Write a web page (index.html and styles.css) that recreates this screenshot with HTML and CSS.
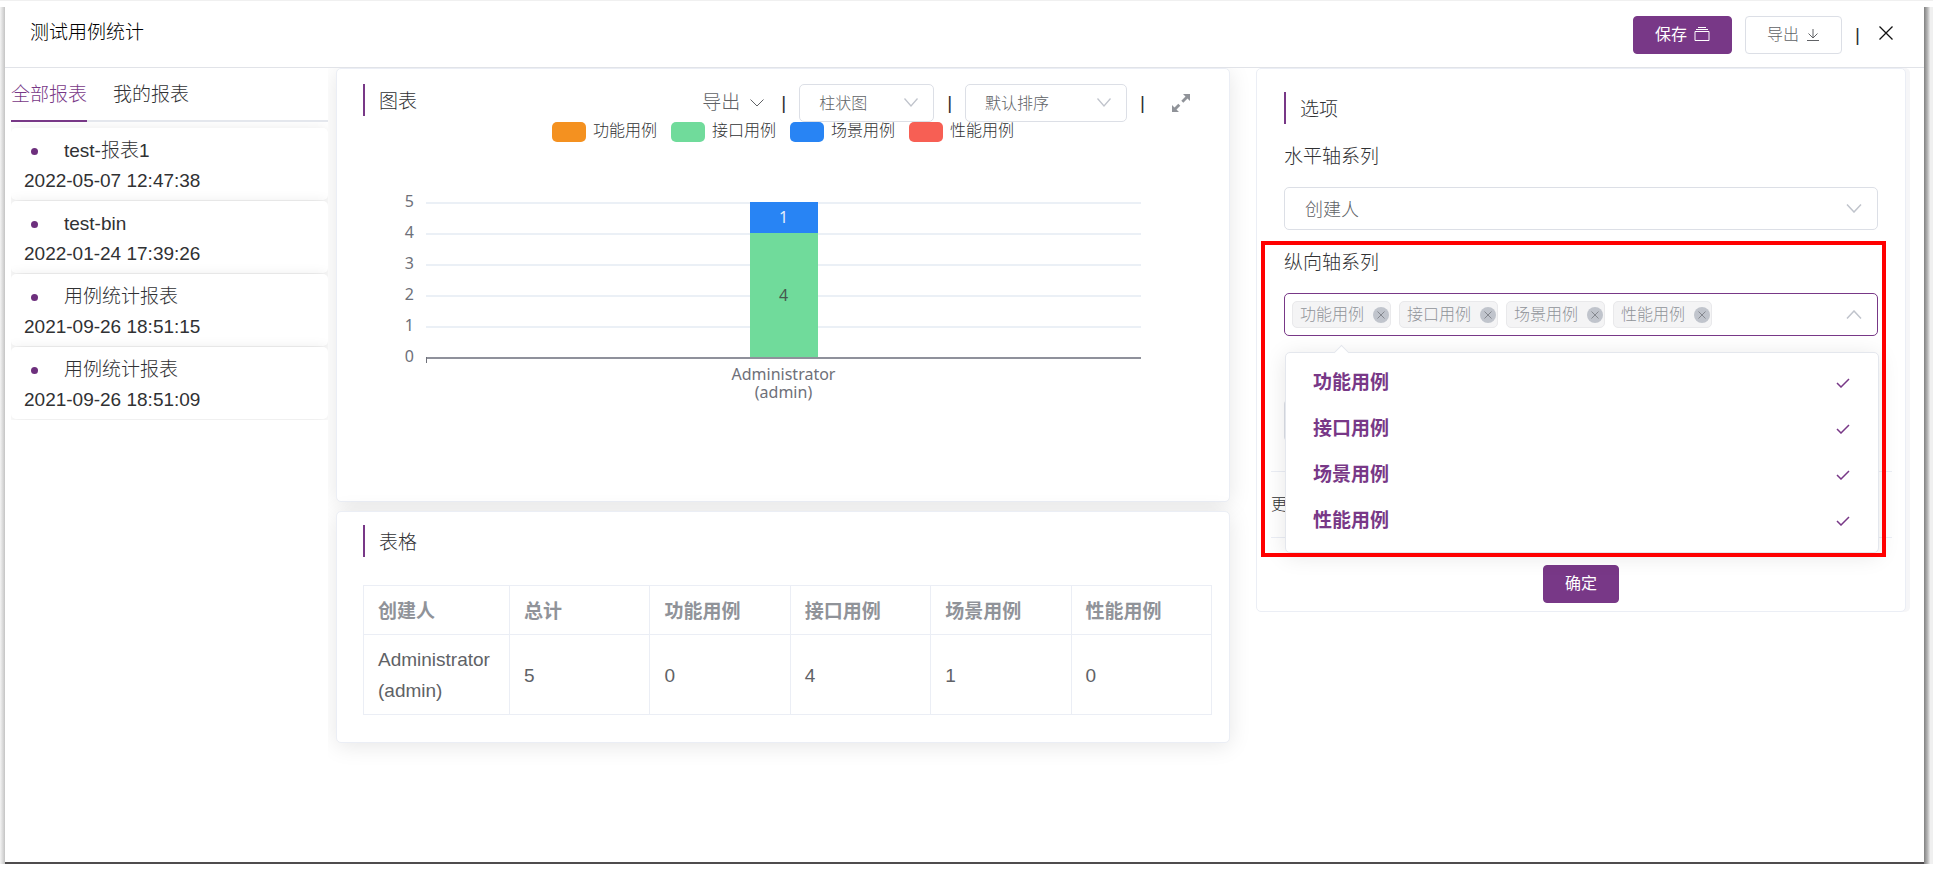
FILE: index.html
```html
<!DOCTYPE html>
<html lang="zh-CN">
<head>
<meta charset="utf-8">
<meta name="viewport" content="width=device-width, initial-scale=1">
<title>测试用例统计</title>
<link rel="stylesheet" href="styles.css">
</head>
<body>
<div class="shell">
<div class="window">
  <header class="topbar">
    <h1 class="topbar-title">测试用例统计</h1>
    <div class="topbar-actions">
      <button class="btn btn-primary" type="button">保存
        <svg class="icon" width="16" height="16" viewBox="0 0 16 16" fill="none" stroke="currentColor"><path d="M1 4.500h14v9H1zM2 2.500h12M4 .5h8"/></svg>
      </button>
      <button class="btn" type="button">导出
        <svg class="icon" width="14" height="14" viewBox="0 0 14 14" fill="none" stroke="currentColor"><path d="M1 12.500h12M7 1v9M2.500 5.500 7 10l4.500-4.500"/></svg>
      </button>
      <span class="bar">|</span>
      <button class="close" type="button" aria-label="关闭">
        <svg width="14" height="14" viewBox="0 0 14 14" fill="none" stroke="currentColor" stroke-width="1.300"><path d="M.5.5l13 13M13.500.5l-13 13"/></svg>
      </button>
    </div>
  </header>

  <div class="columns">
    <aside class="sidebar">
      <nav class="tabs">
        <button class="tab tab-active" type="button">全部报表</button>
        <button class="tab" type="button">我的报表</button>
      </nav>
      <ul class="reports">
        <li class="report"><a class="report-name" href="#">test-报表1</a><time class="report-time">2022-05-07 12:47:38</time></li>
        <li class="report"><a class="report-name" href="#">test-bin</a><time class="report-time">2022-01-24 17:39:26</time></li>
        <li class="report"><a class="report-name" href="#">用例统计报表</a><time class="report-time">2021-09-26 18:51:15</time></li>
        <li class="report"><a class="report-name" href="#">用例统计报表</a><time class="report-time">2021-09-26 18:51:09</time></li>
      </ul>
    </aside>

    <div class="stage">
      <main class="main">
        <section class="card chart-card">
          <div class="card-head">
            <h2 class="card-title">图表</h2>
            <div class="tools">
              <button class="text-btn" type="button">导出
                <svg width="14" height="8" viewBox="0 0 14 8" fill="none" stroke="currentColor"><path d="M.5.5 7 7 13.500.5"/></svg>
              </button>
              <span class="bar">|</span>
              <span class="picker picker-type">
                <select class="select select-small" aria-label="图表类型"><option>柱状图</option></select>
                <svg class="chevron" width="14" height="9" viewBox="0 0 14 9" fill="none" stroke="currentColor" stroke-width="1.300"><path d="M.5.5 7 8 13.500.5"/></svg>
              </span>
              <span class="bar">|</span>
              <span class="picker picker-sort">
                <select class="select select-small" aria-label="排序"><option>默认排序</option></select>
                <svg class="chevron" width="14" height="9" viewBox="0 0 14 9" fill="none" stroke="currentColor" stroke-width="1.300"><path d="M.5.5 7 8 13.500.5"/></svg>
              </span>
              <span class="bar">|</span>
              <button class="expand" type="button" aria-label="全屏">
                <svg width="18" height="18" viewBox="0 0 18 18" fill="currentColor"><path d="M11 0h7v7l-2.500-2.500-4.200 4.200-2-2L13.500 2.500zM7 18H0v-7l2.500 2.500L6.300 9.700l2 2L4.500 15.500z"/></svg>
              </button>
            </div>
          </div>
          <ul class="legend">
            <li class="legend-item"><i class="swatch orange"></i>功能用例</li>
            <li class="legend-item"><i class="swatch green"></i>接口用例</li>
            <li class="legend-item"><i class="swatch blue"></i>场景用例</li>
            <li class="legend-item"><i class="swatch red"></i>性能用例</li>
          </ul>
          <div class="chart">
            <div class="y-axis"><span>5</span><span>4</span><span>3</span><span>2</span><span>1</span><span>0</span></div>
            <div class="plot">
              <div class="gridline"></div><div class="gridline"></div><div class="gridline"></div><div class="gridline"></div><div class="gridline"></div>
              <div class="stack">
                <div class="segment blue">1</div>
                <div class="segment segment-tall green">4</div>
              </div>
            </div>
            <div class="x-label">Administrator<br>(admin)</div>
          </div>
        </section>

        <section class="card table-card">
          <h2 class="card-title">表格</h2>
          <table class="table">
            <thead><tr><th class="first-col">创建人</th><th>总计</th><th>功能用例</th><th>接口用例</th><th>场景用例</th><th>性能用例</th></tr></thead>
            <tbody><tr><td>Administrator (admin)</td><td>5</td><td>0</td><td>4</td><td>1</td><td>0</td></tr></tbody>
          </table>
        </section>
      </main>

      <section class="card options">
        <h2 class="card-title">选项</h2>
        <div class="field">
          <label class="label" for="x-series">水平轴系列</label>
          <span class="picker">
            <select class="select" id="x-series"><option>创建人</option></select>
            <svg class="chevron" width="16" height="9" viewBox="0 0 16 9" fill="none" stroke="currentColor" stroke-width="1.500"><path d="M1 .5 8 8 15 .5"/></svg>
          </span>
        </div>
        <div class="field field-marked">
          <span class="label" id="y-series">纵向轴系列</span>
          <div class="multi" role="combobox" aria-expanded="true" aria-labelledby="y-series" aria-controls="series-list">
            <span class="tag">功能用例<button class="tag-x" type="button" aria-label="移除功能用例"><svg width="8" height="8" viewBox="0 0 8 8" stroke="currentColor"><path d="M.5.5l7 7M7.500.5l-7 7"/></svg></button></span>
            <span class="tag">接口用例<button class="tag-x" type="button" aria-label="移除接口用例"><svg width="8" height="8" viewBox="0 0 8 8" stroke="currentColor"><path d="M.5.5l7 7M7.500.5l-7 7"/></svg></button></span>
            <span class="tag">场景用例<button class="tag-x" type="button" aria-label="移除场景用例"><svg width="8" height="8" viewBox="0 0 8 8" stroke="currentColor"><path d="M.5.5l7 7M7.500.5l-7 7"/></svg></button></span>
            <span class="tag">性能用例<button class="tag-x" type="button" aria-label="移除性能用例"><svg width="8" height="8" viewBox="0 0 8 8" stroke="currentColor"><path d="M.5.5l7 7M7.500.5l-7 7"/></svg></button></span>
            <svg class="chevron-up" width="16" height="9" viewBox="0 0 16 9" fill="none" stroke="currentColor" stroke-width="1.500"><path d="M1 8.500 8 1l7 7.500"/></svg>
          </div>
          <ul class="menu" id="series-list" role="listbox" aria-multiselectable="true">
            <li class="option" role="option" aria-selected="true">功能用例<svg width="14" height="10" viewBox="0 0 14 10" fill="none" stroke="currentColor" stroke-width="1.500"><path d="M1 5l4 4 8-8"/></svg></li>
            <li class="option" role="option" aria-selected="true">接口用例<svg width="14" height="10" viewBox="0 0 14 10" fill="none" stroke="currentColor" stroke-width="1.500"><path d="M1 5l4 4 8-8"/></svg></li>
            <li class="option" role="option" aria-selected="true">场景用例<svg width="14" height="10" viewBox="0 0 14 10" fill="none" stroke="currentColor" stroke-width="1.500"><path d="M1 5l4 4 8-8"/></svg></li>
            <li class="option" role="option" aria-selected="true">性能用例<svg width="14" height="10" viewBox="0 0 14 10" fill="none" stroke="currentColor" stroke-width="1.500"><path d="M1 5l4 4 8-8"/></svg></li>
          </ul>
          <div class="marker"></div>
        </div>
        <div class="field">
          <span class="label"></span>
          <div class="select"></div>
        </div>
        <div class="more">更</div>
        <button class="btn btn-primary confirm" type="button">确定</button>
      </section>
    </div>
  </div>
</div>
</div>
</body>
</html>
```
FILE: styles.css
```css
:root {
  --purple: #783887;
  --line: #dcdfe6;
  --soft-line: #ebeef5;
  --text: #303133;
  --text-2: #606266;
  --muted: #909399;
  --faint: #c0c4cc;
}

* { box-sizing: border-box; }

body {
  margin: 0;
  min-height: 100vh;
  display: flex;
  flex-direction: column;
  padding: 6px 0 7px;
  border-top: 1px solid #f0f0f0;
  background: #fff;
  color: var(--text);
  font: 300 19px/30px "Liberation Sans", "Noto Sans CJK SC", sans-serif;
}

button, select { font: inherit; color: inherit; }
button { background: none; border: 0; padding: 0; cursor: pointer; }
ul { list-style: none; margin: 0; padding: 0; }
h1, h2 { margin: 0; font-size: 19px; font-weight: 300; }
svg { display: block; flex: none; }

/* window frame with its edge shadows */
.shell {
  flex: 1;
  display: flex;
  padding: 0 9px 2px 5px;
  background:
    linear-gradient(to right, #f4f4f4, #c4c4c4) left / 5px 100% no-repeat,
    linear-gradient(to right, #808080, #b8b8b8 40%, #f0f0f0 70%) right / 9px 100% no-repeat,
    #4f4c4e;
}
.window { flex: 1; min-width: 0; background: #fff; }

.topbar {
  display: flex;
  justify-content: space-between;
  align-items: flex-start;
  padding: 9px 31px 13px 25px;
  border-bottom: 1px solid #e1e3e8;
}
.topbar-title { line-height: 34px; color: #000; }
.topbar-actions { display: flex; align-items: flex-start; gap: 13px; }
.bar { line-height: 38px; }
.close { height: 34px; margin-left: 6px; color: #111; }

.btn {
  display: inline-flex;
  align-items: center;
  justify-content: center;
  gap: 7px;
  height: 38px;
  padding: 0 21px;
  border: 1px solid var(--line);
  border-radius: 4px;
  font-size: 16px;
  color: var(--text-2);
}
.btn-primary { background: var(--purple); border-color: var(--purple); color: #fff; font-weight: 400; }

.columns {
  display: grid;
  grid-template-columns: 323fr 1596fr;
}
.sidebar { padding-left: 6px; overflow: hidden; }
.tabs { display: flex; gap: 26px; box-shadow: inset 0 -2px #e4e7ed; }
.tab { height: 54px; padding-top: 2px; border-bottom: 2px solid transparent; }
.tab-active { color: var(--purple); border-color: var(--purple); }
.reports { display: grid; gap: 1px; padding: 6px 0 1px; overflow: hidden; }
.report {
  padding: 8px 13px 4px;
  border-radius: 5px;
  background: #fff;
  box-shadow: 0 2px 14px rgba(0, 0, 0, .1);
}
.report-name {
  display: flex;
  align-items: center;
  gap: 26px;
  padding-left: 7px;
  color: inherit;
  text-decoration: none;
}
.report-name::before {
  content: "";
  width: 7px;
  height: 7px;
  border-radius: 50%;
  background: #6d2f7d;
}
.report-time { display: block; }

.stage {
  display: grid;
  grid-template-columns: 894fr 650fr;
  align-items: start;
  gap: 26px;
  margin-right: 13px;
  padding: 0 5px 30px 8px;
  overflow: hidden;
}
.main { display: grid; gap: 9px; }
.card {
  border: 1px solid var(--soft-line);
  border-radius: 5px;
  background: #fff;
  box-shadow: 0 3px 22px rgba(0, 0, 0, .1);
}
.card-title {
  height: 32px;
  line-height: 35px;
  padding-left: 14px;
  border-left: 2px solid var(--purple);
}

.chart-card { padding: 15px 0 100px; }
.card-head {
  display: flex;
  justify-content: space-between;
  align-items: flex-start;
  padding: 0 39px 0 26px;
}
.tools { display: flex; align-items: center; gap: 13px; }
.text-btn { display: flex; align-items: center; gap: 10px; margin-right: 4px; color: var(--text-2); }
.expand { margin-left: 14px; color: var(--muted); }

.picker { position: relative; display: block; }
.picker-type { width: 135px; }
.picker-sort { width: 162px; }
.select {
  display: block;
  width: 100%;
  height: 43px;
  padding: 2px 20px 0;
  border: 1px solid var(--line);
  border-radius: 5px;
  background: #fff;
  appearance: none;
  font-size: 18px;
  color: var(--text-2);
}
.select-small { height: 38px; padding: 2px 19px 0; font-size: 16px; }
.chevron {
  position: absolute;
  right: 16px;
  top: 50%;
  margin-top: -5px;
  color: var(--faint);
  pointer-events: none;
}

.legend {
  display: flex;
  justify-content: center;
  gap: 14px;
  font-size: 16px;
  line-height: 18px;
}
.legend-item { display: flex; gap: 7px; }
.swatch { width: 34px; height: 20px; border-radius: 5px; }
.orange { background: #f49120; }
.green { background: #70db9b; }
.blue { background: #2884f4; }
.red { background: #f75f54; }

.chart {
  display: grid;
  grid-template-columns: 77px 1fr;
  column-gap: 12px;
  padding: 60px 88px 0 0;
  font: 400 16px/18px "Noto Sans", sans-serif;
  color: #6e7079;
}
.y-axis { display: grid; grid-auto-rows: 31px; height: 156px; text-align: right; margin-top: -10px; }
.plot {
  position: relative;
  display: grid;
  grid-auto-rows: 31px;
  border-bottom: 2px solid #8f919b;
}
.plot::before {
  content: "";
  position: absolute;
  left: 0;
  top: 100%;
  width: 1px;
  height: 6px;
  background: #6e7079;
}
.gridline { border-top: 2px solid #ebf0f6; }
.stack {
  position: absolute;
  bottom: 0;
  left: 50%;
  width: 68px;
  margin-left: -34px;
  text-align: center;
}
.segment { line-height: 31px; color: #e4eefb; }
.segment-tall { line-height: 124px; color: #46584e; }
.x-label { grid-column: 2; margin-top: 6px; text-align: center; }

.table-card { padding: 13px 17px 27px 26px; }
.table {
  width: 100%;
  margin-top: 28px;
  border-collapse: separate;
  border-spacing: 0;
  border-top: 1px solid var(--soft-line);
  border-left: 1px solid var(--soft-line);
  table-layout: fixed;
}
.table th, .table td {
  padding: 9px 14px 8px;
  border-right: 1px solid var(--soft-line);
  border-bottom: 1px solid var(--soft-line);
  text-align: left;
}
.table th { padding: 11px 14px 7px; color: var(--muted); font-weight: 700; }
.table td { color: var(--text-2); line-height: 31px; font-weight: 400; }
.table .first-col { width: 146px; }

.options { padding: 23px 27px 8px; box-shadow: 4px 0 #f6f6f8; }
.field { margin-top: 17px; }
.label { display: block; height: 30px; margin-bottom: 16px; line-height: 32px; }
.field-marked { position: relative; }
.multi {
  display: flex;
  align-items: center;
  gap: 8px;
  height: 43px;
  padding: 0 15px 0 7px;
  border: 1px solid var(--purple);
  border-radius: 5px;
}
.tag {
  display: flex;
  align-items: center;
  justify-content: space-between;
  width: 99px;
  height: 27px;
  padding: 0 1px 0 7px;
  border: 1px solid #e9e9eb;
  border-radius: 5px;
  background: #f4f4f5;
  color: var(--muted);
  font-size: 16px;
}
.tag-x {
  display: grid;
  place-items: center;
  width: 16px;
  height: 16px;
  border-radius: 50%;
  background: var(--faint);
  color: #85888f;
}
.chevron-up { margin-left: auto; color: var(--faint); }

.menu {
  position: absolute;
  z-index: 2;
  top: calc(100% + 16px);
  left: 1px;
  right: -1px;
  padding: 7px 0 8px;
  border: 1px solid #e4e7ed;
  border-radius: 5px;
  background: #fff;
  box-shadow: 0 3px 22px rgba(0, 0, 0, .1);
}
.menu::before {
  content: "";
  position: absolute;
  top: -6px;
  left: 50px;
  width: 10px;
  height: 10px;
  border: solid #e4e7ed;
  border-width: 1px 0 0 1px;
  background: #fff;
  transform: rotate(45deg);
}
.option {
  display: flex;
  align-items: center;
  justify-content: space-between;
  height: 46px;
  padding: 0 28px 0 27px;
  line-height: 32px;
  color: var(--purple);
  font-weight: 700;
}
/* highlight frame round the open field and its menu */
.marker {
  position: absolute;
  z-index: 3;
  top: -6px;
  bottom: -221px;
  left: -23px;
  right: -8px;
  border: 4px solid #f00;
  pointer-events: none;
}
.more {
  margin: 29px -14px 0 -13px;
  border: solid var(--soft-line);
  border-width: 1px 0;
  font-size: 16px;
  line-height: 65px;
}
.confirm { display: flex; margin: 27px auto 0; }
```
